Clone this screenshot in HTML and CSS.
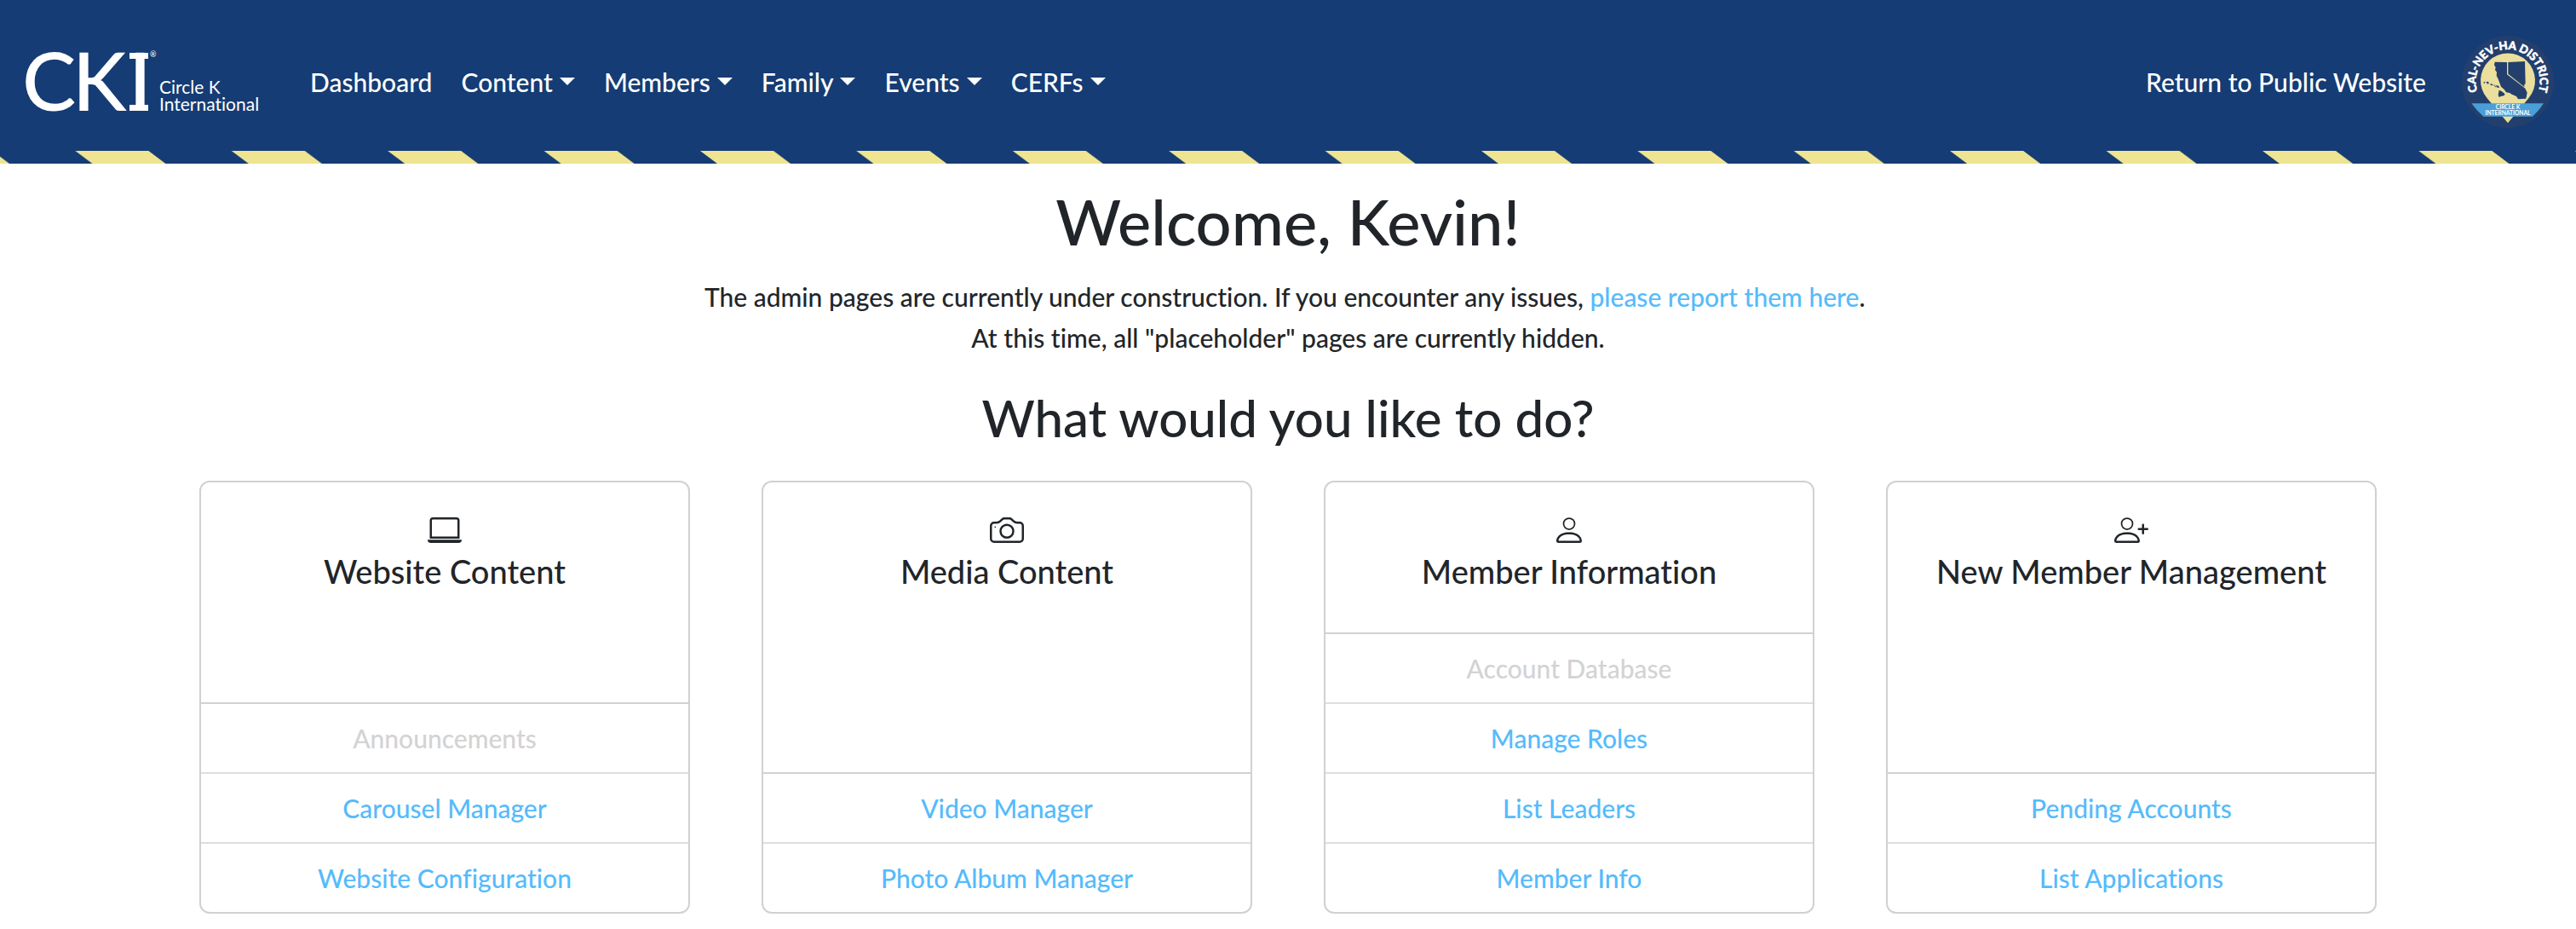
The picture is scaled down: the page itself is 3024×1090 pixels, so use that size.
FILE: index.html
```
<!DOCTYPE html>
<html lang="en">
<head>
<meta charset="utf-8">
<meta name="viewport" content="width=device-width, initial-scale=1">
<title>Admin Dashboard – Cal-Nev-Ha Circle K</title>
<link rel="stylesheet" href="styles.css">
</head>
<body>
<header class="site-header">
  <div class="navbar">
    <a class="brand" href="#" aria-label="Circle K International">
      <svg class="brand-logo" viewBox="-6 -20 286 124" aria-hidden="true">
        <g class="brand-mark">
          <text x="-4" y="76">C</text>
          <text x="55" y="76">K</text>
          <text x="121" y="76">I</text>
        </g>
        <rect x="122" y="8" width="22" height="7"/>
        <rect x="122" y="69" width="22" height="7"/>
        <text class="brand-reg" x="146" y="13">®</text>
        <g class="brand-name">
          <text x="157" y="56">Circle K</text>
          <text x="157" y="76">International</text>
        </g>
      </svg>
    </a>
    <nav class="menu" aria-label="Main">
      <a class="menu-item" href="#">Dashboard</a>
      <button class="menu-item has-caret" type="button">Content</button>
      <button class="menu-item has-caret" type="button">Members</button>
      <button class="menu-item has-caret" type="button">Family</button>
      <button class="menu-item has-caret" type="button">Events</button>
      <button class="menu-item has-caret" type="button">CERFs</button>
    </nav>
    <a class="menu-item public-link" href="#">Return to Public Website</a>
    <a class="district" href="#" aria-label="Cal-Nev-Ha District">
      <svg class="district-badge" viewBox="30 36 324 324" aria-hidden="true">
        <defs><path id="badge-arc" d="M82 223A113 113 0 1 1 302 223"/></defs>
        <circle cx="192" cy="198" r="162" fill="#233f6d"/>
        <path fill="#eadf9c" d="M192 343L119 256A96 96 0 1 1 265 256Z"/>
        <path fill="#233f6d" d="M146 128L189 129V172L253 221L260 236L256 257L228 259L222 249L206 242L198 237L186 235L180 226L168 215L163 202L158 188L152 176L153 164L147 156L149 147L144 139Z"/>
        <path fill="#233f6d" d="M193 129L252 126L254 205L250 208L250 216L193 170Z"/>
        <path fill="#233f6d" d="M161 227L171 232L181 240L180 246L168 249L161 252L158 244ZM106 201l4-4 3 3-5 4zM115 199l7-2 4 5-5 4zM129 205l9 1 1 5-7-1zM140 209l8 0-3 4zM146 214l5-1 1 4-4 0zM150 209l10 4 2 6-7-1z"/>
        <path fill="#4a9fd8" d="M64 274H318Q302 300 279 320H106Q82 300 64 274Z"/>
        <text class="badge-arc-text"><textPath href="#badge-arc" startOffset="50%">CAL-NEV-HA DISTRICT</textPath></text>
        <text class="badge-ribbon-text" x="192" y="293">CIRCLE K</text>
        <text class="badge-ribbon-text" x="192" y="315">INTERNATIONAL</text>
      </svg>
    </a>
  </div>
  <svg class="stripes" aria-hidden="true">
    <defs>
      <pattern id="stripe" x="-95" y="0" width="183.4" height="15" patternUnits="userSpaceOnUse">
        <path fill="#efe492" d="M0 0H86L106 15H20Z"/>
      </pattern>
    </defs>
    <rect width="100%" height="15" fill="url(#stripe)"/>
  </svg>
</header>

<main class="page">
  <h1>Welcome, Kevin!</h1>
  <p>The admin pages are currently under construction. If you encounter any issues, <a href="#">please report them here</a>.&nbsp;</p>
  <p>At this time, all "placeholder" pages are currently hidden.</p>
  <h2>What would you like to do?</h2>

  <div class="cards">
    <section class="card">
      <div class="card-head">
        <svg class="icon" viewBox="0 0 16 16" aria-hidden="true"><path d="M13.5 3a.5.5 0 0 1 .5.5V11H2V3.5a.5.5 0 0 1 .5-.5h11zm-11-1A1.5 1.5 0 0 0 1 3.5V12h14V3.5A1.5 1.5 0 0 0 13.500 2h-11zM0 12.500h16a1.500 1.500 0 0 1-1.500 1.500h-13A1.500 1.500 0 0 1 0 12.500z"/></svg>
        <h3>Website Content</h3>
      </div>
      <ul class="links">
        <li><span class="disabled">Announcements</span></li>
        <li><a href="#">Carousel Manager</a></li>
        <li><a href="#">Website Configuration</a></li>
      </ul>
    </section>

    <section class="card">
      <div class="card-head">
        <svg class="icon" viewBox="0 0 16 16" aria-hidden="true"><path d="M15 12a1 1 0 0 1-1 1H2a1 1 0 0 1-1-1V6a1 1 0 0 1 1-1h1.172a3 3 0 0 0 2.120-.879l.830-.828A1 1 0 0 1 6.827 3h2.344a1 1 0 0 1 .707.293l.828.828A3 3 0 0 0 12.828 5H14a1 1 0 0 1 1 1v6zM2 4a2 2 0 0 0-2 2v6a2 2 0 0 0 2 2h12a2 2 0 0 0 2-2V6a2 2 0 0 0-2-2h-1.172a2 2 0 0 1-1.414-.586l-.828-.828A2 2 0 0 0 9.172 2H6.828a2 2 0 0 0-1.414.586l-.828.828A2 2 0 0 1 3.172 4H2z"/><path d="M8 11a2.500 2.500 0 1 1 0-5 2.500 2.500 0 0 1 0 5zm0 1a3.500 3.500 0 1 0 0-7 3.500 3.500 0 0 0 0 7z"/><circle cx="2.500" cy="6.500" r=".35"/></svg>
        <h3>Media Content</h3>
      </div>
      <ul class="links">
        <li><a href="#">Video Manager</a></li>
        <li><a href="#">Photo Album Manager</a></li>
      </ul>
    </section>

    <section class="card">
      <div class="card-head">
        <svg class="icon" viewBox="0 0 16 16" aria-hidden="true"><circle cx="8" cy="5" r="2.600" fill="none" stroke="currentColor" stroke-width=".7"/><path d="M14 13c0 1-1 1-1 1H3s-1 0-1-1 1-4 6-4 6 3 6 4zm-1-.004c-.001-.246-.154-.986-.832-1.664C11.516 10.680 10.289 10 8 10c-2.290 0-3.516.680-4.168 1.332-.678.678-.830 1.418-.832 1.664h10z"/></svg>
        <h3>Member Information</h3>
      </div>
      <ul class="links">
        <li><span class="disabled">Account Database</span></li>
        <li><a href="#">Manage Roles</a></li>
        <li><a href="#">List Leaders</a></li>
        <li><a href="#">Member Info</a></li>
      </ul>
    </section>

    <section class="card">
      <div class="card-head">
        <svg class="icon" viewBox="0 0 16 16" aria-hidden="true"><circle cx="6" cy="5" r="2.600" fill="none" stroke="currentColor" stroke-width=".7"/><path d="M12 13c0 1-1 1-1 1H1s-1 0-1-1 1-4 6-4 6 3 6 4zm-1-.004c-.001-.246-.154-.986-.832-1.664C9.516 10.680 8.289 10 6 10c-2.290 0-3.516.680-4.168 1.332-.678.678-.830 1.418-.832 1.664h10z"/><path d="M13.500 5a.5.5 0 0 1 .5.5V7h1.500a.5.5 0 0 1 0 1H14v1.500a.5.5 0 0 1-1 0V8h-1.500a.5.5 0 0 1 0-1H13V5.500a.5.5 0 0 1 .5-.5z"/></svg>
        <h3>New Member Management</h3>
      </div>
      <ul class="links">
        <li><a href="#">Pending Accounts</a></li>
        <li><a href="#">List Applications</a></li>
      </ul>
    </section>
  </div>
</main>
</body>
</html>
```
FILE: styles.css
```
* {
  box-sizing: border-box;
}

body {
  margin: 0;
  background: #fff;
  color: #212529;
  font-family: "Lato", "Noto Sans", sans-serif;
  font-size: 30px;
  font-weight: 500;
  line-height: 48px;
  font-variant-ligatures: none;
}

a {
  color: #55bbfb;
  text-decoration: none;
}

h1, h2, h3, p, ul {
  margin: 0;
  padding: 0;
  font-weight: 500;
}

/* Header */
.site-header {
  background: #153c74;
  color: #fff;
}

.navbar {
  display: flex;
  align-items: center;
  padding: 34px 26px 19px 24px;
}

.brand,
.district {
  display: block;
}

.brand-logo {
  display: block;
  width: 286px;
  height: 124px;
  fill: #fff;
}

.brand-mark {
  font-size: 95px;
}

.brand-name {
  font-size: 21px;
  font-weight: 400;
}

.brand-reg {
  font-size: 9px;
}

.menu {
  display: flex;
  flex: 1;
  gap: 34px;
  padding-left: 54px;
}

.menu-item {
  padding: 0;
  border: 0;
  background: none;
  color: #fff;
  font: inherit;
  white-space: nowrap;
  cursor: pointer;
}

.has-caret::after {
  content: "";
  display: inline-block;
  margin-left: 8px;
  border: 9px solid transparent;
  border-top-color: #fff;
  border-bottom-width: 0;
  vertical-align: 8px;
}

.public-link {
  margin-right: 42px;
}

.district-badge {
  display: block;
  width: 108px;
  height: 108px;
  fill: #fff;
  font-family: "Liberation Sans Narrow", "Lato", sans-serif;
  font-weight: 700;
  text-anchor: middle;
}

.badge-arc-text {
  font-size: 40px;
  stroke: #fff;
  stroke-width: 2px;
}

.badge-ribbon-text {
  font-size: 20px;
}

.stripes {
  display: block;
  width: 100%;
  height: 15px;
}

/* Dashboard */
.page {
  padding: 20px 0 18px;
  text-align: center;
}

h1 {
  margin-bottom: 16px;
  font-size: 74px;
  line-height: 96px;
}

h2 {
  margin: 32px 0 36px;
  font-size: 60px;
  line-height: 76px;
}

h3 {
  font-size: 38px;
  line-height: 48px;
}

.cards {
  display: grid;
  grid-template-columns: repeat(4, 1fr);
  gap: 84px;
  max-width: 2640px;
  margin: 0 auto;
  padding: 0 42px;
}

.card {
  display: flex;
  flex-direction: column;
  border: 2px solid #d1d1d1;
  border-radius: 12px;
}

.card-head {
  flex: 1;
  padding: 36px 16px 48px;
}

.icon {
  display: block;
  width: 40px;
  height: 40px;
  margin: 0 auto 4px;
  fill: currentColor;
}

.links {
  border-top: 2px solid #d1d1d1;
  list-style: none;
}

.links li {
  padding: 16px;
}

.links li + li {
  border-top: 2px solid #dedede;
}

.disabled {
  color: #d3d3d3;
}
```
